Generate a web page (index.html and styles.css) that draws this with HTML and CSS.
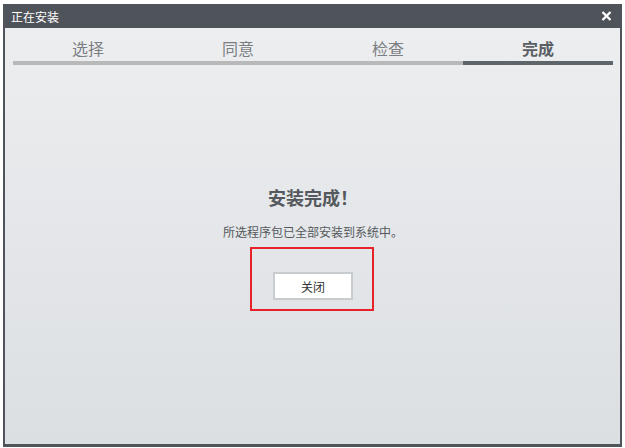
FILE: index.html
```html
<!DOCTYPE html>
<html lang="zh">
<head>
    <meta charset="UTF-8">
    <title>正在安装</title>
    <link rel="stylesheet" href="styles.css">
</head>
<body>
    <div id="installer" class="window">
        <div class="titlebar">
            <span class="title">正在安装</span>
            <svg class="close" width="11" height="10" viewBox="0 0 11 10">
                <path d="M1.5 1 L9.5 9 M9.5 1 L1.5 9" stroke="#fff" stroke-width="2.4" fill="none"/>
            </svg>
        </div>
        <div class="content">
            <div class="steps">
                <div class="step done">选择</div>
                <div class="step done">同意</div>
                <div class="step done">检查</div>
                <div class="step current">完成</div>
            </div>
            <div class="result">
                <h1>安装完成！</h1>
                <p>所选程序包已全部安装到系统中。</p>
                <div class="actions">
                    <button class="btn">关闭</button>
                    <div class="highlight"></div>
                </div>
            </div>
        </div>
    </div>
</body>
</html>
```

FILE: styles.css
```css
body, html {
    margin: 0;
    padding: 0;
    background: #fff;
    font-family: "Noto Sans CJK SC", "Noto Sans", sans-serif;
}
.window {
    box-sizing: border-box;
    width: 619px;
    height: 443px;
    margin: 4px 0 0 3px;
    padding: 0 2px 3px 2px;
    background: #4f535a;
    display: flex;
    flex-direction: column;
}
.titlebar {
    height: 24px;
    display: flex;
    justify-content: space-between;
    align-items: center;
    color: #fff;
    padding: 0 8px 0 6px;
}
.title {
    font-size: 12px;
}
.close {
    display: block;
}
.content {
    flex: 1;
    background: linear-gradient(#eceef0, #dcdfe2);
    padding: 0 7px 0 8px;
    display: flex;
    flex-direction: column;
}
.steps {
    display: grid;
    grid-template-columns: repeat(4, 1fr);
    padding-top: 8px;
}
.step {
    text-align: center;
    font-size: 16px;
    line-height: 24px;
    padding-bottom: 1px;
    color: #7b7f83;
    border-bottom: 4px solid #b9b9b9;
}
.step.current {
    color: #5a5f64;
    font-weight: bold;
    border-bottom-color: #5f666b;
}
.result {
    display: flex;
    flex-direction: column;
    align-items: center;
    color: #55595d;
}
.result h1 {
    margin: 120px 0 0 0;
    font-size: 18px;
    line-height: 24px;
}
.result p {
    margin: 15px 0 0 0;
    font-size: 12px;
    line-height: 16px;
}
.actions {
    position: relative;
    margin-top: 32px;
}
.btn {
    width: 80px;
    height: 28px;
    background: #fff;
    border: 2px solid #c9ccce;
    font-family: inherit;
    font-size: 12px;
    color: #333;
    padding: 0;
}
.highlight {
    position: absolute;
    left: -23px;
    right: -21px;
    top: -25px;
    bottom: -11px;
    border: 2px solid #e8222a;
}
```
